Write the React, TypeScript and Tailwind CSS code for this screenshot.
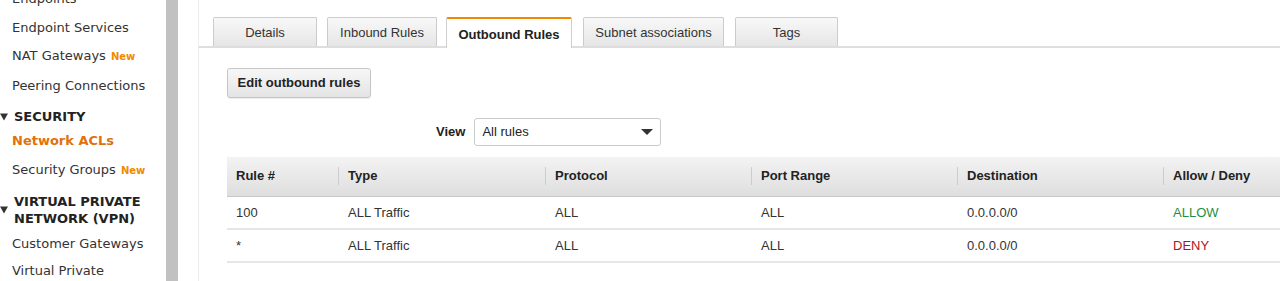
import React from 'react';

const sideFont = { fontFamily: '"DejaVu Sans", Verdana, sans-serif' };

const NewBadge = () => (
  <span className="ml-[5px] text-[10px] font-bold text-[#f08a00]">New</span>
);

const Tri = () => (
  <span className="absolute left-0 top-1/2 -translate-y-1/2 w-0 h-0 border-l-[4px] border-r-[4px] border-t-[7px] border-l-transparent border-r-transparent border-t-[#333]" />
);

function Sidebar() {
  return (
    <div className="w-[166px] shrink-0 bg-white text-[13px] text-[#333] leading-[16px] pl-[12px]" style={sideFont}>
      <div className="-mt-[9px]">Endpoints</div>
      <div className="mt-[13px]">Endpoint Services</div>
      <div className="mt-[12px] flex items-baseline">NAT Gateways<NewBadge /></div>
      <div className="mt-[13px]">Peering Connections</div>
      <div className="relative -ml-[12px] pl-[14px] mt-[15px] font-bold text-[#222]">
        <Tri />
        SECURITY
      </div>
      <div className="mt-[8px] font-bold text-[#e0720c]">Network ACLs</div>
      <div className="mt-[13px] flex items-baseline">Security Groups<NewBadge /></div>
      <div className="relative -ml-[12px] pl-[14px] mt-[14px] font-bold text-[#222] leading-[17px]">
        <Tri />
        VIRTUAL PRIVATE
        <br />
        NETWORK (VPN)
      </div>
      <div className="mt-[9px]">Customer Gateways</div>
      <div className="mt-[11px]">Virtual Private</div>
    </div>
  );
}

const tabs = [
  { label: 'Details', w: 'w-[104px] mr-[10px]' },
  { label: 'Inbound Rules', w: 'w-[110px] mr-[9px]' },
  { label: 'Outbound Rules', w: 'w-[126px] mr-[11px]', active: true },
  { label: 'Subnet associations', w: 'w-[141px] mr-[11px]' },
  { label: 'Tags', w: 'w-[103px]' },
];

const cols = ['Rule #', 'Type', 'Protocol', 'Port Range', 'Destination', 'Allow / Deny'];
const rows = [
  ['100', 'ALL Traffic', 'ALL', 'ALL', '0.0.0.0/0', 'ALLOW'],
  ['*', 'ALL Traffic', 'ALL', 'ALL', '0.0.0.0/0', 'DENY'],
];
const grid = 'grid grid-cols-[111px_207px_206px_206px_206px_1fr]';

export default function App() {
  return (
    <div className="w-[1280px] h-[281px] overflow-hidden flex bg-white">
      <Sidebar />
      <div className="w-[12px] shrink-0 bg-[#c1c1c1]" />
      <div className="w-[21px] shrink-0 bg-white border-r border-[#ececec]" />
      <div className="flex-1 min-w-0 text-[13px] text-[#333]" style={{ fontFamily: '"Liberation Sans", Arial, sans-serif' }}>
        <div className="pt-[17px] pl-[14px] flex items-end border-b-2 border-[#dedede] h-[48px]">
          {tabs.map(t =>
            t.active ? (
              <div key={t.label} className={`${t.w} h-[31px] -mb-[2px] bg-white border border-b-0 border-[#cfcfcf] border-t-2 border-t-[#f08a00] rounded-t-[2px] flex items-center justify-center pt-[3px] font-bold text-[#222]`}>
                {t.label}
              </div>
            ) : (
              <div key={t.label} className={`${t.w} h-[29px] pt-[2px] bg-gradient-to-b from-[#f8f8f8] to-[#e6e6e6] border border-b-0 border-[#cccccc] rounded-t-[2px] flex items-center justify-center text-[#333]`}>
                {t.label}
              </div>
            )
          )}
        </div>
        <div className="pl-[28px]">
          <div className="mt-[20px] w-[144px] h-[30px] rounded-[3px] border border-[#c6c6c6] bg-gradient-to-b from-[#f7f7f7] to-[#e4e4e4] shadow-[0_1px_1px_rgba(0,0,0,0.08)] flex items-center justify-center font-bold text-[#222]">
            Edit outbound rules
          </div>
          <div className="mt-[20px] ml-[209px] flex items-center">
            <span className="font-bold text-[#222]">View</span>
            <div className="ml-[9px] w-[187px] h-[28px] border border-[#cccccc] rounded-[3px] flex items-center pl-[7px] pr-[7px] text-[#222]">
              <span className="flex-1">All rules</span>
              <span className="w-0 h-0 border-l-[6px] border-r-[6px] border-t-[6px] border-l-transparent border-r-transparent border-t-[#333]" />
            </div>
          </div>
          <div className="mt-[11px]">
            <div className={`${grid} h-[40px] pb-[2px] bg-gradient-to-b from-[#f3f3f3] to-[#dedede] border-b border-[#c8c8c8] font-bold text-[#222]`}>
              {cols.map((c, i) => (
                <div key={c} className="flex items-center">
                  {i > 0 && <span className="w-px h-[18px] bg-[#cccccc]" />}
                  <span className={i > 0 ? 'ml-[9px]' : 'ml-[9px]'}>{c}</span>
                </div>
              ))}
            </div>
            {rows.map((r, ri) => (
              <div key={ri} className={`${grid} h-[33px] border-b-2 border-[#e6e6e6] text-[#333]`}>
                {r.map((v, i) => (
                  <div key={i} className={`flex items-center ${i > 0 ? 'pl-[10px]' : 'pl-[9px]'} ${v === 'ALLOW' ? 'text-[#1e9041]' : v === 'DENY' ? 'text-[#b3121b]' : ''}`}>
                    {v}
                  </div>
                ))}
              </div>
            ))}
          </div>
        </div>
      </div>
    </div>
  );
}
